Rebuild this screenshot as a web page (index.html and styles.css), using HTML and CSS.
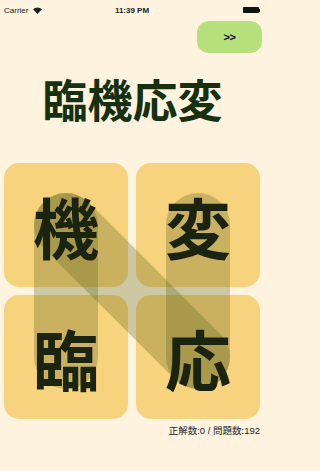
FILE: index.html
```html
<!DOCTYPE html>
<html lang="ja">
<head>
<meta charset="utf-8">
<title>臨機応変</title>
<link rel="stylesheet" href="styles.css">
</head>
<body>
<div class="status">
  <div class="carrier">Carrier
    <svg class="wifi" width="9" height="7" viewBox="0 0 9 7">
      <path d="M4.5 7 L0 2.2 A6.5 6.5 0 0 1 9 2.2 Z" fill="#222"/>
    </svg>
  </div>
  <div class="time">11:39 PM</div>
  <div class="battery"><span class="cell"></span><span class="tip"></span></div>
</div>
<div class="toprow">
  <div class="next">&gt;&gt;</div>
</div>
<h1 class="title">臨機応変</h1>
<div class="board">
  <div class="tile"><span class="ch">機</span></div>
  <div class="tile"><span class="ch">変</span></div>
  <div class="tile"><span class="ch">臨</span></div>
  <div class="tile"><span class="ch">応</span></div>
  <svg class="trace" width="257" height="257" viewBox="0 0 257 257">
    <g stroke="rgba(95,100,25,0.3)" stroke-width="64" stroke-linecap="round" fill="none">
      <line x1="62" y1="194" x2="62" y2="62"/>
      <line x1="62" y1="62" x2="194" y2="194"/>
      <line x1="194" y1="194" x2="194" y2="62"/>
    </g>
  </svg>
</div>
<div class="score">正解数:0 / 問題数:192</div>
</body>
</html>
```
FILE: styles.css
```css
html, body {
  margin: 0;
  padding: 0;
}
body {
  background: #fdf3df;
  width: 265px;
  height: 471px;
  overflow: hidden;
  font-family: "Liberation Sans", Arial, "Noto Sans CJK JP", sans-serif;
}
.status {
  height: 20px;
  display: flex;
  align-items: center;
  justify-content: space-between;
  padding: 0 5px 0 4px;
  font-size: 8px;
  color: #222;
}
.carrier {
  display: flex;
  align-items: center;
  gap: 5px;
  width: 60px;
}
.time {
  font-weight: bold;
  font-size: 8px;
}
.battery {
  width: 60px;
  display: flex;
  justify-content: flex-end;
  align-items: center;
}
.cell {
  width: 16px;
  height: 6px;
  background: #111;
  border-radius: 1px;
}
.tip {
  width: 1px;
  height: 3px;
  background: #111;
}
.toprow {
  display: flex;
  justify-content: flex-end;
  padding-right: 3px;
  margin-top: 1px;
}
.next {
  width: 65px;
  height: 32px;
  border-radius: 12px;
  background: #b6e07c;
  display: flex;
  align-items: center;
  justify-content: center;
  font-weight: bold;
  font-size: 11px;
  color: #111;
  letter-spacing: -0.5px;
}
.title {
  margin: 22px 0 0;
  text-align: center;
  font-family: "Noto Sans CJK JP", sans-serif;
  font-weight: 700;
  font-size: 45px;
  line-height: 48px;
  color: #163010;
}
.board {
  position: relative;
  margin: 40px 0 0 4px;
  width: 257px;
  display: grid;
  grid-template-columns: 124px 124px;
  grid-auto-rows: 124px;
  gap: 8px;
  padding-right: 4px;
}
.tile {
  background: #f7d37e;
  border-radius: 15px;
  display: flex;
  align-items: center;
  justify-content: center;
}
.ch {
  position: relative;
  z-index: 2;
  font-family: "Noto Sans CJK JP", sans-serif;
  font-weight: 700;
  font-size: 66px;
  line-height: 66px;
  color: #1b2410;
}
.trace {
  position: absolute;
  left: 0;
  top: 0;
  z-index: 1;
}
.score {
  margin-top: 6px;
  text-align: right;
  padding-right: 5px;
  font-size: 9.5px;
  line-height: 12px;
  color: #222;
  font-family: "Liberation Sans", "Noto Sans CJK JP", sans-serif;
}
```
